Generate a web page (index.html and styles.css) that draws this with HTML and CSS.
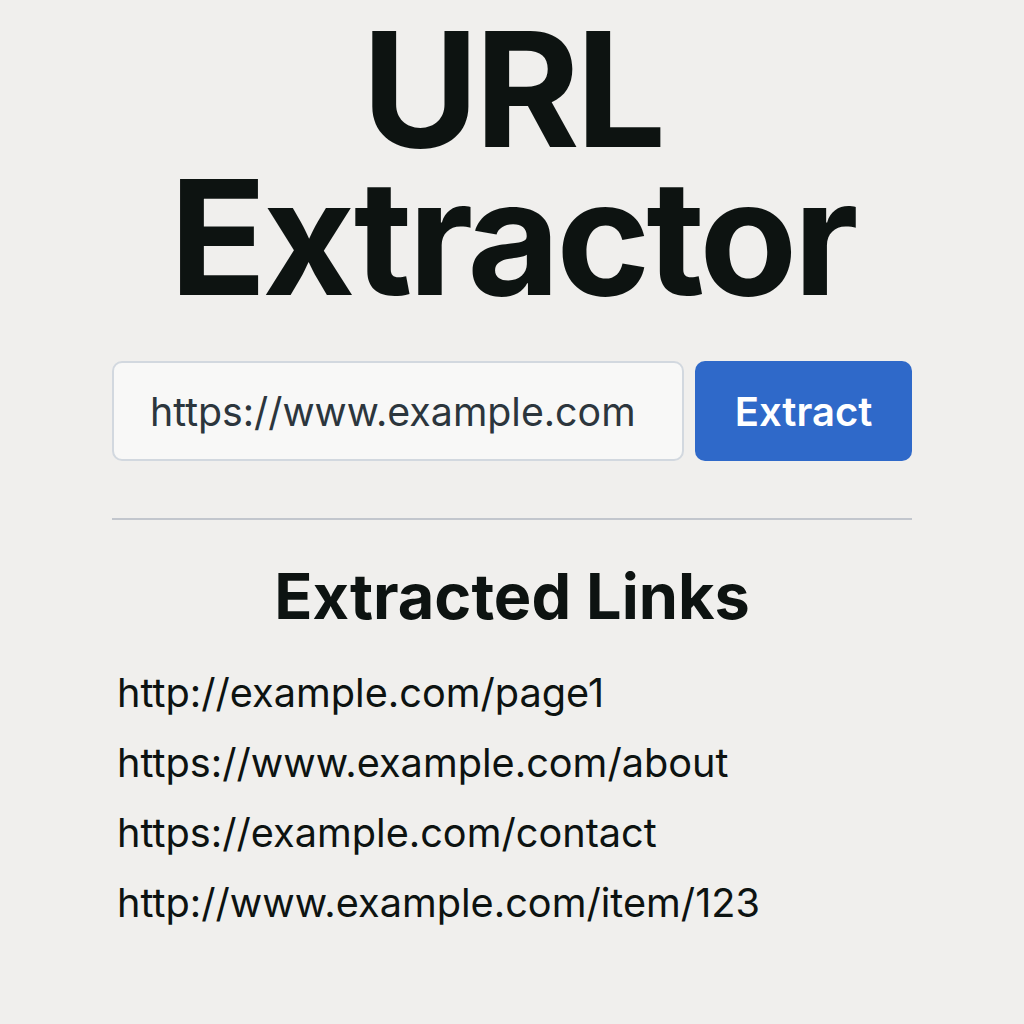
FILE: index.html
```html
<!DOCTYPE html>
<html lang="en">
<head>
  <meta charset="UTF-8" />
  <meta name="viewport" content="width=device-width, initial-scale=1.0"/>
  <title>URL Extractor</title>
  <link rel="stylesheet" href="styles.css">
</head>
<body>
  <div class="pagina">
    <h1 class="titulo">URL<br>Extractor</h1>

    <!-- Campo da URL e botão -->
    <div class="form-url">
      <input type="text" class="campo-url" value="https://www.example.com" />
      <button class="btn-extrair">Extract</button>
    </div>

    <hr class="divisor" />

    <h2 class="subtitulo">Extracted Links</h2>

    <!-- Lista de links encontrados -->
    <ul class="lista-links">
      <li>http://example.com/page1</li>
      <li>https://www.example.com/about</li>
      <li>https://example.com/contact</li>
      <li>http://www.example.com/item/123</li>
    </ul>
  </div>
</body>
</html>
```

FILE: styles.css
```css
/* Estilo geral da página */
body {
  margin: 0;
  font-family: 'Inter', 'Liberation Sans', sans-serif;
  background-color: #f0efed;
  color: #0d1311;
}

.pagina {
  max-width: 800px;
  margin: 0 auto;
}

/* Título grande */
.titulo {
  margin: 15px 0 0;
  font-size: 160px;
  line-height: 148px;
  font-weight: 700;
  text-align: center;
  letter-spacing: -4px;
}

/* Campo + botão */
.form-url {
  display: flex;
  gap: 11px;
  margin-top: 50px;
  height: 100px;
}

.campo-url {
  flex: 1;
  width: 0;
  min-width: 0;
  box-sizing: border-box;
  padding: 0 36px;
  border: 2px solid #d2d8df;
  border-radius: 10px;
  background-color: #f8f8f7;
  font-family: inherit;
  font-size: 39.3px;
  color: #2c363d;
}

.btn-extrair {
  flex: 0 0 217px;
  border: none;
  border-radius: 10px;
  background-color: #2f69c9;
  color: white;
  font-family: inherit;
  font-size: 40px;
  font-weight: 600;
  cursor: pointer;
}

/* Linha divisória */
.divisor {
  margin: 57px 0 0;
  border: none;
  height: 2px;
  background-color: #c2c6cd;
}

.subtitulo {
  margin: 39px 0 0;
  font-size: 63px;
  line-height: 1.2;
  font-weight: 700;
  text-align: center;
}

/* Lista sem marcadores */
.lista-links {
  list-style: none;
  margin: 23px 0 0;
  padding: 0 0 0 5px;
  font-size: 39.7px;
  line-height: 70px;
}
```
